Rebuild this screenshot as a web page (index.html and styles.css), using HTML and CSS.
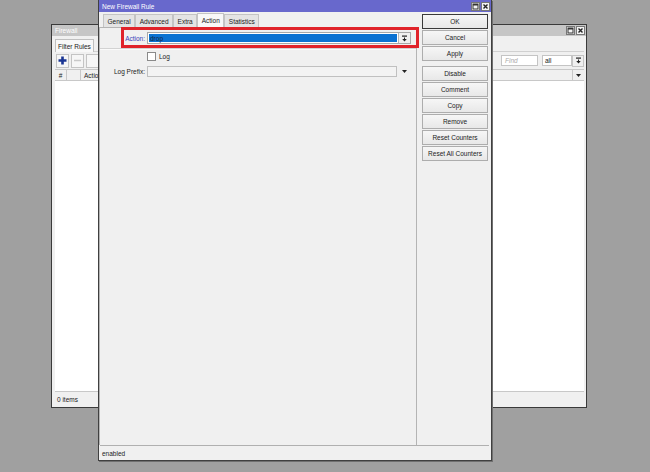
FILE: index.html
```html
<!DOCTYPE html>
<html>
<head>
<meta charset="utf-8">
<link rel="stylesheet" href="styles.css">
</head>
<body>
<div class="bgwin">
  <div class="bg-title"><span class="name">Firewall</span>
    <div class="winbtns">
      <div class="wbtn"><svg width="7" height="7" viewBox="0 0 7 7"><rect x="1" y="1" width="5" height="5" fill="none" stroke="#333" stroke-width="1"/><rect x="1" y="1" width="5" height="1.5" fill="#333"/></svg></div>
      <div class="wbtn"><svg width="7" height="7" viewBox="0 0 7 7"><path d="M1.5 1.5 L5.5 5.5 M5.5 1.5 L1.5 5.5" stroke="#222" stroke-width="1.4"/></svg></div>
    </div>
  </div>
  <div class="bg-inner">
    <div class="bg-tabs"><div class="bg-tab">Filter Rules</div></div>
    <div class="bg-toolbar">
      <div class="tbtn"><svg width="9" height="9" viewBox="0 0 9 9"><path d="M4.5 0.5 V8.5 M0.5 4.5 H8.5" stroke="#1a3593" stroke-width="2.6"/></svg></div>
      <div class="tbtn"><svg width="9" height="9" viewBox="0 0 9 9"><path d="M1 4.5 H8" stroke="#c8c8c8" stroke-width="1.5"/></svg></div>
      <div class="tbtn"></div>
      <div class="tb-right">
        <div class="find">Find</div>
        <div class="allbox">all</div>
        <div class="ddbtn"><svg width="7" height="7" viewBox="0 0 7 7"><rect x="1" y="0.5" width="5" height="1.2" fill="#222"/><path d="M3 2.5 H4 V4 H5.8 L3.5 6.5 L1.2 4 H3 Z" fill="#222"/></svg></div>
      </div>
    </div>
    <div class="bg-header">
      <div class="hc hc-num">#</div>
      <div class="hc hc-flag"></div>
      <div class="hc hc-act">Action</div>
      <div class="hc-dd"><svg width="7" height="5" viewBox="0 0 7 5"><path d="M1 1 H6 L3.5 4 Z" fill="#222"/></svg></div>
    </div>
    <div class="bg-body"></div>
    <div class="bg-status">0 items</div>
  </div>
</div>

<div class="dialog">
  <div class="dlg-title"><span class="name">New Firewall Rule</span>
    <div class="winbtns">
      <div class="wbtn"><svg width="7" height="7" viewBox="0 0 7 7"><rect x="1" y="1" width="5" height="5" fill="none" stroke="#333" stroke-width="1"/><rect x="1" y="1" width="5" height="1.5" fill="#333"/></svg></div>
      <div class="wbtn"><svg width="7" height="7" viewBox="0 0 7 7"><path d="M1.5 1.5 L5.5 5.5 M5.5 1.5 L1.5 5.5" stroke="#222" stroke-width="1.4"/></svg></div>
    </div>
  </div>
  <div class="dlg-main">
    <div class="dlg-left">
      <div class="tabs">
        <div class="tab">General</div>
        <div class="tab">Advanced</div>
        <div class="tab">Extra</div>
        <div class="tab active">Action</div>
        <div class="tab">Statistics</div>
      </div>
      <div class="panel">
        <div class="row action-row">
          <div class="label blue">Action:</div>
          <div class="select">
            <div class="sel-val">drop</div>
            <div class="sel-btn"><svg width="7" height="7" viewBox="0 0 7 7"><rect x="1" y="0.5" width="5" height="1.2" fill="#222"/><path d="M3 2.5 H4 V4 H5.8 L3.5 6.5 L1.2 4 H3 Z" fill="#222"/></svg></div>
          </div>
        </div>
        <div class="sep"></div>
        <div class="row log-row">
          <div class="label"></div>
          <div class="check"></div>
          <span class="check-label">Log</span>
        </div>
        <div class="row prefix-row">
          <div class="label">Log Prefix:</div>
          <div class="input"></div>
          <div class="arrow"><svg width="7" height="5" viewBox="0 0 7 5"><path d="M1 1 H6 L3.5 4 Z" fill="#222"/></svg></div>
        </div>
      </div>
    </div>
    <div class="btncol">
      <div class="btn default">OK</div>
      <div class="btn">Cancel</div>
      <div class="btn">Apply</div>
      <div class="btn-gap"></div>
      <div class="btn">Disable</div>
      <div class="btn">Comment</div>
      <div class="btn">Copy</div>
      <div class="btn">Remove</div>
      <div class="btn">Reset Counters</div>
      <div class="btn">Reset All Counters</div>
    </div>
  </div>
  <div class="dlg-status">enabled</div>
</div>

<div class="highlight"></div>
</body>
</html>
```

FILE: styles.css
```css
* { box-sizing: border-box; }
html, body { margin: 0; padding: 0; }
body {
  width: 650px;
  height: 472px;
  background: #a0a0a0;
  position: relative;
  overflow: hidden;
  font-family: "Liberation Sans", Arial, sans-serif;
  font-size: 6.5px;
  color: #222;
}

/* shared window buttons */
.winbtns { display: flex; gap: 1px; }
.wbtn {
  width: 9px; height: 9px;
  border: 1px solid #777;
  background: #f4f4f4;
  display: flex; align-items: center; justify-content: center;
}

/* background Firewall window */
.bgwin {
  position: absolute;
  left: 51px; top: 24px;
  width: 536px; height: 384px;
  border: 1px solid #3a3a3a;
  background: #f0f0f0;
  display: flex; flex-direction: column;
}
.bg-title {
  height: 11px;
  background: #c6c6c6;
  color: #fff;
  display: flex; align-items: center;
  padding: 0 1px 0 3px;
}
.bg-title .name { flex: 1; }
.bg-inner {
  flex: 1;
  display: flex; flex-direction: column;
  padding: 0 2px 1px 3px;
}
.bg-tabs {
  height: 16px;
  display: flex; align-items: flex-end;
  border-bottom: 1px solid #d0d0d0;
}
.bg-tab {
  height: 13px;
  padding: 0 2px;
  border: 1px solid #c0c0c0; border-bottom: none;
  background: #f8f8f8;
  display: flex; align-items: center;
  margin-bottom: -1px;
}
.bg-toolbar {
  height: 17px;
  display: flex; align-items: center; gap: 2px;
  padding-left: 1px;
}
.tbtn {
  width: 13px; height: 14px;
  border: 1px solid #c4c4c4;
  background: #f6f6f6;
  display: flex; align-items: center; justify-content: center;
}
.tb-right {
  margin-left: auto;
  display: flex; align-items: center;
}
.find {
  width: 37px; height: 11px;
  border: 1px solid #c4c4c4;
  background: #fff;
  color: #aaa;
  font-style: italic;
  padding-left: 3px;
  display: flex; align-items: center;
  margin-right: 4px;
}
.allbox {
  width: 30px; height: 11px;
  border: 1px solid #c4c4c4;
  background: #fff;
  padding-left: 2px;
  display: flex; align-items: center;
}
.ddbtn {
  width: 12px; height: 12px;
  border: 1px solid #c4c4c4;
  background: #f0f0f0;
  display: flex; align-items: center; justify-content: center;
}
.bg-header {
  height: 12px;
  display: flex; align-items: center;
  border-top: 1px solid #c8c8c8;
  border-bottom: 1px solid #c8c8c8;
  background: #f0f0f0;
}
.hc { height: 100%; display: flex; align-items: center; }
.hc-num { width: 12px; justify-content: center; border-right: 1px solid #c8c8c8; }
.hc-flag { width: 14px; border-right: 1px solid #c8c8c8; }
.hc-act { padding-left: 3px; flex: 1; }
.hc-dd { width: 12px; display: flex; align-items: center; justify-content: center; border-left: 1px solid #c8c8c8; height: 100%; }
.bg-body { flex: 1; background: #fff; border-bottom: 1px solid #c8c8c8; }
.bg-status {
  height: 14px;
  display: flex; align-items: center;
  padding-left: 2px;
}

/* front dialog */
.dialog {
  position: absolute;
  left: 98px; top: 0;
  width: 394px; height: 461px;
  border: 1px solid #404040;
  border-top: none;
  background: #f0f0f0;
  display: flex; flex-direction: column;
  box-shadow: 1px 1px 0 #707070;
}
.dlg-title {
  height: 12px;
  background: #6868cc;
  color: #fff;
  display: flex; align-items: center;
  padding: 0 1px 0 3px;
}
.dlg-title .name { flex: 1; }
.dlg-main { flex: 1; display: flex; }
.dlg-left { width: 318px; display: flex; flex-direction: column; }
.tabs {
  height: 15px;
  display: flex; align-items: flex-end;
  padding-left: 4px;
}
.tab {
  height: 13px;
  padding: 0 3.5px;
  border: 1px solid #c4c4c4; border-bottom: none;
  background: #e4e4e4;
  display: flex; align-items: center;
}
.tab.active { height: 14px; background: #f8f8f8; }
.panel {
  flex: 1;
  border: 1px solid #b4b4b4;
  border-bottom: none;
  background: #f0f0f0;
  padding-top: 4px;
}
.row { display: flex; align-items: center; }
.label {
  width: 47px;
  text-align: right;
  padding-right: 2px;
  flex: none;
}
.label.blue { color: #3a3ab8; }
.action-row { height: 12px; }
.select {
  width: 264px; height: 12px;
  border: 1px solid #a8a8a8;
  background: #fff;
  display: flex;
}
.sel-val {
  flex: 1;
  margin: 1px;
  background: #0b72d2;
  color: #12223c;
  padding-left: 1px;
  display: flex; align-items: center;
}
.sel-btn {
  width: 12px;
  border-left: 1px solid #b8b8b8;
  background: #f0f0f0;
  display: flex; align-items: center; justify-content: center;
}
.sep {
  height: 1px;
  background: #d2d2d2;
  margin-top: 4px;
  box-shadow: 0 1px 0 #fafafa;
}
.log-row { margin-top: 3px; height: 9px; }
.check {
  width: 9px; height: 9px;
  border: 1px solid #8a8a8a;
  background: #fff;
}
.check-label { margin-left: 3px; }
.prefix-row { margin-top: 5px; height: 11px; }
.input {
  width: 250px; height: 11px;
  border: 1px solid #c0c0c0;
  background: #f3f3f3;
}
.arrow {
  width: 14px;
  display: flex; justify-content: center; align-items: center;
}
.btncol {
  width: 66px;
  margin-left: 5px;
  padding-top: 2px;
  display: flex; flex-direction: column;
}
.btn {
  height: 15px;
  margin-bottom: 1px;
  border: 1px solid #adadad;
  background: linear-gradient(#f6f6f6, #e8e8e8);
  display: flex; align-items: center; justify-content: center;
  white-space: nowrap;
}
.btn.default { border-color: #3a3a3a; }
.btn-gap { height: 4px; flex: none; }
.dlg-status {
  height: 15px;
  border-top: 1px solid #b0b0b0;
  margin: 0 2px 0 1px;
  padding-left: 2px;
  display: flex; align-items: center;
}

/* red annotation overlay */
.highlight {
  position: absolute;
  left: 121px; top: 27px;
  width: 298px; height: 21px;
  border: 3px solid #e0232a;
}
```
